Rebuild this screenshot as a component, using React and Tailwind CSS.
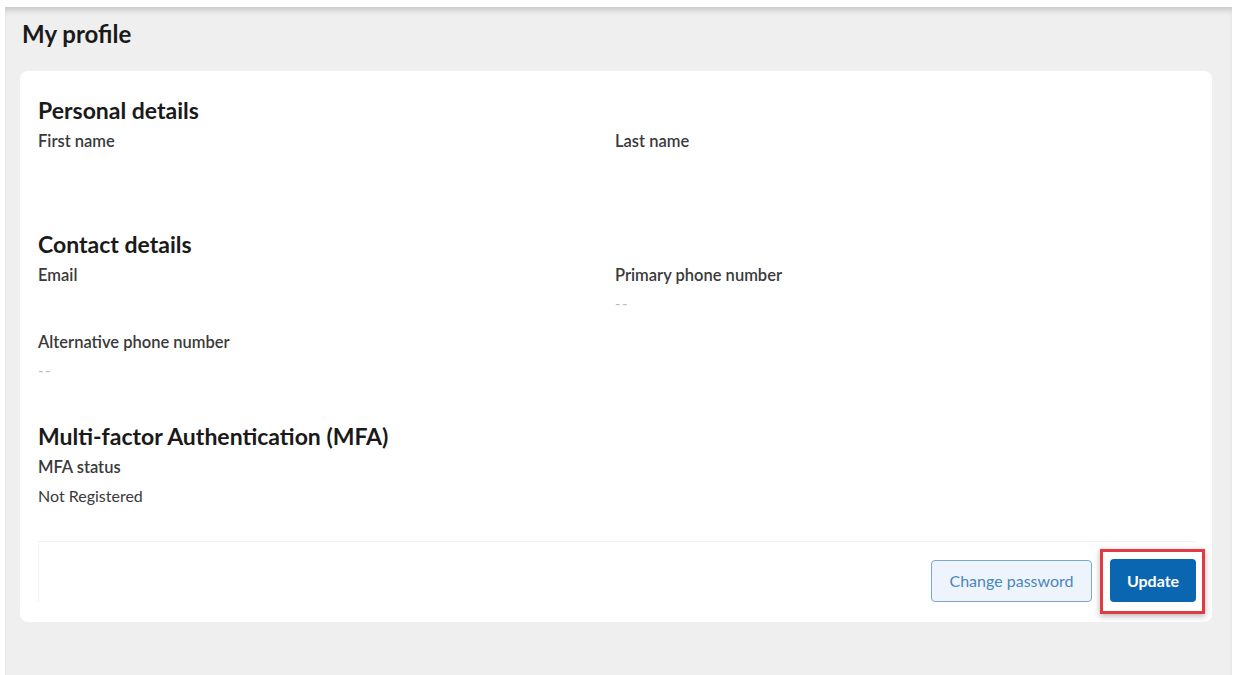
import React from 'react';

function Field({ label, value, empty }) {
  return (
    <div className="flex flex-col">
      <span className="text-[16.5px] leading-[22px] font-semibold text-[#3a3a3a]">{label}</span>
      {empty ? (
        <span className="mt-[10px] text-[15px] leading-[14px] tracking-[1.5px] text-[#bdbdbd]">--</span>
      ) : value ? (
        <span className="mt-[7px] text-[16px] leading-[22px] text-[#3a3a3a]">{value}</span>
      ) : null}
    </div>
  );
}

function SectionTitle({ children }) {
  return <h2 className="text-[23px] leading-[28px] font-bold text-[#1a1a1a]">{children}</h2>;
}

export default function App() {
  return (
    <div className="w-[1234px] h-[675px] bg-white pt-[7px] pl-[5px] pr-[2px] overflow-hidden" style={{ fontFamily: 'Lato, "Open Sans", sans-serif' }}>
      <div className="h-[668px] bg-[#efefef] shadow-[inset_0_6px_6px_-3px_rgba(0,0,0,0.18)] pt-[13px] pl-[15px] pr-[20px]">
        <h1 className="pl-[2px] text-[24px] leading-[28px] font-bold text-[#1a1a1a]">My profile</h1>

        <div className="mt-[23px] bg-white rounded-[8px] pt-[25px] pb-[20px] pl-[18px] pr-[16px]">
          <section>
            <SectionTitle>Personal details</SectionTitle>
            <div className="grid grid-cols-[577px_1fr] mt-[6px] h-[100px]">
              <Field label="First name" />
              <Field label="Last name" />
            </div>
          </section>

          <section>
            <SectionTitle>Contact details</SectionTitle>
            <div className="grid grid-cols-[577px_1fr] mt-[6px] gap-y-[21px]">
              <Field label="Email" />
              <Field label="Primary phone number" empty />
              <Field label="Alternative phone number" empty />
            </div>
          </section>

          <section className="mt-[45px]">
            <SectionTitle>Multi-factor Authentication (MFA)</SectionTitle>
            <div className="mt-[6px]">
              <Field label="MFA status" value="Not Registered" />
            </div>
          </section>

          <div className="mt-[34px] border-t border-l border-[#f2f2f2] pt-[17px] flex justify-end items-end gap-[18px]">
            <button className="h-[42px] w-[161px] rounded-[4px] border border-[#7aa8d2] bg-[#eef4fb] text-[16px] text-[#4a86bd]">
              Change password
            </button>
            <div className="relative">
              <button className="h-[43px] w-[86px] rounded-[4px] bg-[#0b66b1] text-[16px] font-bold text-white">
                Update
              </button>
              <div className="absolute -left-[10px] -top-[10px] -right-[9px] -bottom-[12px] border-[3px] border-[#e23a42] shadow-[0_2px_6px_rgba(0,0,0,0.3)] pointer-events-none" />
            </div>
          </div>
        </div>
      </div>
    </div>
  );
}
